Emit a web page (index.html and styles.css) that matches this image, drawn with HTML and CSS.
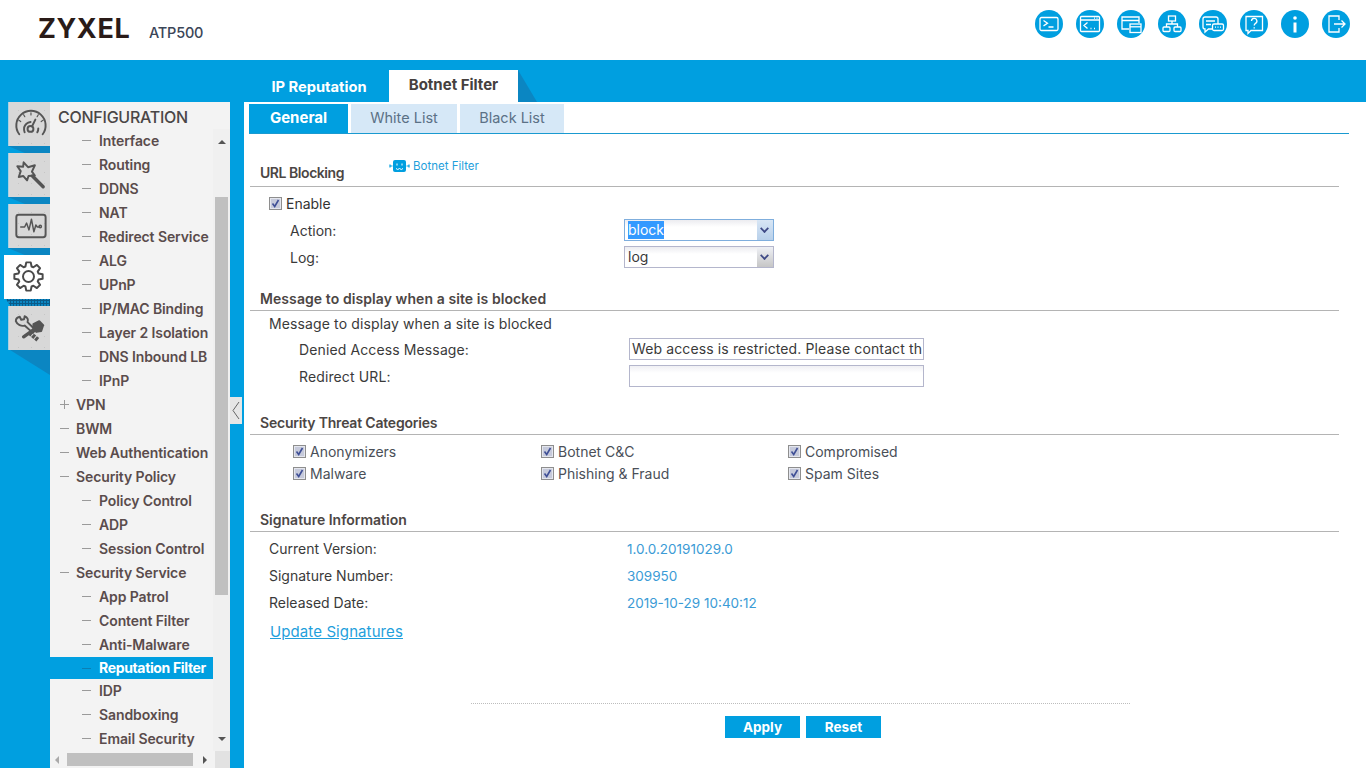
FILE: index.html
```html
<!DOCTYPE html>
<html lang="en">
<head>
<meta charset="utf-8">
<title>ATP500 Botnet Filter</title>
<link rel="stylesheet" href="styles.css">
</head>
<body>
<header class="topbar">
  <div class="brand"><span class="logo">ZYXEL</span><span class="model">ATP500</span></div>
  <div class="tools">
    <svg class="tool" viewBox="0 0 28 28"><circle cx="14" cy="14" r="14" class="disc"/><rect x="5" y="7.500" width="18" height="13" rx="1.500"/><path d="M8.500 10.500l4 2.700-4 2.700M13.500 17h5"/></svg>
    <svg class="tool" viewBox="0 0 28 28"><circle cx="14" cy="14" r="14" class="disc"/><rect x="4.500" y="6.500" width="19" height="15" rx="1"/><path d="M4.500 10h19M11.500 12.500l-3.500 3 3.500 3M14.500 18.500h1M18 18.500h1M18 8.200h1M20.500 8.200h1"/></svg>
    <svg class="tool" viewBox="0 0 28 28"><circle cx="14" cy="14" r="14" class="disc"/><path d="M12 19H5V7h17v6M5 10.500h17"/><rect x="13" y="14" width="11" height="8.500" class="box"/><path d="M13 16.800h11"/></svg>
    <svg class="tool" viewBox="0 0 28 28"><circle cx="14" cy="14" r="14" class="disc"/><rect x="10.500" y="6" width="7" height="5"/><rect x="5" y="17" width="7" height="4.500" rx="1"/><rect x="16" y="17" width="7" height="4.500" rx="1"/><path d="M14 11v3M8.500 17v-3h11v3"/></svg>
    <svg class="tool" viewBox="0 0 28 28"><circle cx="14" cy="14" r="14" class="disc"/><path d="M19 14V9a2 2 0 0 0-2-2H6a2 2 0 0 0-2 2v8a2 2 0 0 0 2 2v3l3.500-3H13"/><path d="M7 11h9M7 14.500h5"/><rect x="13.500" y="14" width="11" height="6.500" rx="1.500" class="box"/><path d="M16 17.200h1M18.500 17.200h1M21 17.200h1"/></svg>
    <svg class="tool" viewBox="0 0 28 28"><circle cx="14" cy="14" r="14" class="disc"/><path d="M6 6.500h16.500v14H11l-3 3v-3H6z"/><path d="M11.500 11a2.700 2.700 0 1 1 4 2.400c-1 .6-1.300 1-1.300 2.100M14.200 17.300v1.200"/></svg>
    <svg class="tool" viewBox="0 0 28 28"><circle cx="14" cy="14" r="14" class="disc"/><circle cx="14" cy="8" r="1.800" class="dot"/><path class="bar" d="M14 12.500v10"/></svg>
    <svg class="tool" viewBox="0 0 28 28"><circle cx="14" cy="14" r="14" class="disc"/><path d="M17 10V6H7v16h10v-4M12 14h11M19.500 10.500L23 14l-3.500 3.500"/></svg>
  </div>
</header>

<div class="band">
  <nav class="page-tabs">
    <span class="page-tab">IP Reputation</span>
    <span class="page-tab page-tab-on">Botnet Filter</span>
    <span class="page-tab-fold"></span>
  </nav>

  <div class="workspace">
    <aside class="rail">
      <div class="tile">
        <svg class="tile-ico" viewBox="0 0 42 44"><path d="M10.500 32.500a15 15 0 1 1 24 0"/><path d="M10 18l2 1.500M15 12.500l1.200 2M22.500 10.500v2.200M30 12.500l-1.200 2M35 18l-2 1.500" class="thin"/><path d="M16 30.500a7.500 9 0 0 1-.5-5c1-3 3.500-5 6.500-5.500"/><path d="M29 30.500a8 8 0 0 0 1-4"/><circle cx="22" cy="27" r="3"/><path d="M23.500 24.500l3.500-7"/></svg>
      </div>
      <div class="fold"></div>
      <div class="tile">
        <svg class="tile-ico" viewBox="0 0 42 44"><path d="M15 9l4.500 5 7-2-3 6.500 3 4-6.500.5-1.500 4.500-4-4.500-4.500 1 2-6-3.500-5 6 .5z"/><path class="heavy" d="M24 23l11 11"/></svg>
      </div>
      <div class="fold"></div>
      <div class="tile">
        <svg class="tile-ico" viewBox="0 0 42 44"><rect x="7.500" y="10.500" width="30" height="23" rx="2.500"/><path class="mid" d="M12 23h4l2-4 2.500 7 2.500-11 2.500 13 2-7 1.500 2h2"/><circle class="mid" cx="32" cy="22.500" r="1.200"/></svg>
      </div>
      <div class="fold"></div>
      <div class="tile tile-on">
        <svg class="tile-ico" viewBox="0 0 46 44"><g transform="translate(24.500 21.500) scale(1.100)"><polygon class="gear" points="9.080,-2.780 12.840,-2.030 12.840,2.030 9.080,2.780 8.390,4.450 10.510,7.640 7.640,10.510 4.450,8.390 2.780,9.080 2.030,12.840 -2.030,12.840 -2.780,9.080 -4.450,8.390 -7.640,10.510 -10.510,7.640 -8.390,4.450 -9.080,2.780 -12.840,2.030 -12.840,-2.030 -9.080,-2.780 -8.390,-4.450 -10.510,-7.640 -7.640,-10.510 -4.450,-8.390 -2.780,-9.080 -2.030,-12.840 2.030,-12.840 2.780,-9.080 4.450,-8.390 7.640,-10.510 10.510,-7.640 8.390,-4.450"/><circle class="gear" r="5"/></g></svg>
      </div>
      <div class="fold fold-on"></div>
      <div class="tile">
        <svg class="tile-ico" viewBox="0 0 42 44"><path d="M7 15c0-3 1.500-4 4-4.500l1.500 3 3-.5.500-3c3 1 4 3.500 3 6l8 8-2.500 3-8.500-7.500c-3 1-7.500-.5-9-4.500z"/><path class="heavy" d="M15 31l10-7"/><path class="fat" d="M25 18l6-3 4 4-2 6-5 1-3-4z"/><path class="hollow" d="M21 27l8.500 7"/></svg>
      </div>
      <div class="fold fold-last"></div>
    </aside>

    <aside class="sidebar">
      <div class="side-title">CONFIGURATION</div>
      <div class="side-mid">
        <ul class="tree">
          <li class="sub">Interface</li>
          <li class="sub">Routing</li>
          <li class="sub">DDNS</li>
          <li class="sub">NAT</li>
          <li class="sub">Redirect Service</li>
          <li class="sub">ALG</li>
          <li class="sub">UPnP</li>
          <li class="sub">IP/MAC Binding</li>
          <li class="sub">Layer 2 Isolation</li>
          <li class="sub">DNS Inbound LB</li>
          <li class="sub">IPnP</li>
          <li class="top plus">VPN</li>
          <li class="top">BWM</li>
          <li class="top">Web Authentication</li>
          <li class="top">Security Policy</li>
          <li class="sub">Policy Control</li>
          <li class="sub">ADP</li>
          <li class="sub">Session Control</li>
          <li class="top">Security Service</li>
          <li class="sub">App Patrol</li>
          <li class="sub">Content Filter</li>
          <li class="sub">Anti-Malware</li>
          <li class="sub active">Reputation Filter</li>
          <li class="sub">IDP</li>
          <li class="sub">Sandboxing</li>
          <li class="sub">Email Security</li>
        </ul>
        <div class="vscroll">
          <span class="arrow-up"></span>
          <span class="vthumb"></span>
          <span class="arrow-down"></span>
        </div>
      </div>
      <div class="hscroll">
        <span class="arrow-left"></span>
        <span class="hthumb"></span>
        <span class="arrow-right"></span>
        <span class="corner"></span>
      </div>
    </aside>

    <div class="gutter"><span class="collapse"><svg viewBox="0 0 12 27"><path d="M9 5L3 13.500 9 22"/></svg></span></div>

    <main class="content">
      <div class="sub-tabs">
        <span class="sub-tab sub-tab-on">General</span>
        <span class="sub-tab sub-tab-w">White List</span>
        <span class="sub-tab sub-tab-b">Black List</span>
      </div>

      <section class="first">
        <div class="head head-first">
          <h2>URL Blocking</h2>
          <a class="bot-link"><svg class="bot" viewBox="0 0 21 12"><rect x="4" y="0" width="13" height="12" rx="2"/><path class="nub" d="M0.500 6h3M17.500 6h3M1 4.500v3M20 4.500v3"/><path class="face" d="M8 3.500v2M13 3.500v2M7 8.500l1.700 1 1.800-1 1.800 1 1.700-1"/></svg>Botnet Filter</a>
        </div>
        <div class="body-url">
          <label class="row check-row"><svg class="cb"><use href="#cb"/></svg>Enable</label>
          <div class="row form-a"><span class="lbl">Action:</span><span class="combo combo-focus"><span class="combo-text"><span class="hl">block</span></span><span class="combo-btn"></span></span></div>
          <div class="row form-a"><span class="lbl">Log:</span><span class="combo"><span class="combo-text">log</span><span class="combo-btn"></span></span></div>
        </div>
      </section>

      <section class="sec-msg">
        <div class="head"><h2>Message to display when a site is blocked</h2></div>
        <div class="msg-note">Message to display when a site is blocked</div>
        <div class="row form-b"><span class="lbl">Denied Access Message:</span><span class="field">Web access is restricted. Please contact th</span></div>
        <div class="row form-b"><span class="lbl">Redirect URL:</span><span class="field field-empty"></span></div>
      </section>

      <section class="sec-threat">
        <div class="head"><h2>Security Threat Categories</h2></div>
        <div class="cats">
          <label class="cat"><svg class="cb"><use href="#cb"/></svg>Anonymizers</label>
          <label class="cat"><svg class="cb"><use href="#cb"/></svg>Botnet C&amp;C</label>
          <label class="cat"><svg class="cb"><use href="#cb"/></svg>Compromised</label>
          <label class="cat"><svg class="cb"><use href="#cb"/></svg>Malware</label>
          <label class="cat"><svg class="cb"><use href="#cb"/></svg>Phishing &amp; Fraud</label>
          <label class="cat"><svg class="cb"><use href="#cb"/></svg>Spam Sites</label>
        </div>
      </section>

      <section class="sec-sig">
        <div class="head"><h2>Signature Information</h2></div>
        <div class="info">
          <div class="row info-row"><span class="info-lbl">Current Version:</span><span class="val">1.0.0.20191029.0</span></div>
          <div class="row info-row"><span class="info-lbl">Signature Number:</span><span class="val">309950</span></div>
          <div class="row info-row"><span class="info-lbl">Released Date:</span><span class="val">2019-10-29 10:40:12</span></div>
          <a class="update">Update Signatures</a>
        </div>
      </section>

      <footer class="actions">
        <span class="btn">Apply</span>
        <span class="btn">Reset</span>
      </footer>
    </main>
  </div>
</div>

<svg class="sprite" aria-hidden="true">
  <symbol id="cb" viewBox="0 0 13 13">
    <rect x="0.500" y="0.500" width="12" height="12" fill="#e4e6ee" stroke="#8e8e8e"/>
    <rect x="2" y="2" width="9" height="9" fill="#c6cadb"/>
    <path d="M3.500 6.500l2.200 3 3.800-6.500" fill="none" stroke="#3f4f96" stroke-width="1.600"/>
  </symbol>
</svg>
</body>
</html>
```
FILE: styles.css
```css
* { box-sizing: border-box; }
html, body { margin: 0; padding: 0; height: 100%; overflow: hidden; }
body { font-family: Inter, "Liberation Sans", sans-serif; font-size: 14px; color: #3a3a3a; background: #fff; display: flex; flex-direction: column; }
h2 { margin: 0; font: inherit; }
ul { list-style: none; margin: 0; padding: 0; }
.sprite { width: 0; height: 0; display: block; overflow: hidden; }

.topbar { height: 60px; flex: none; background: #fff; display: flex; justify-content: space-between; align-items: center; }
.brand { display: flex; align-items: baseline; padding: 0 0 2px 38px; }
.logo { font-size: 27px; font-weight: 700; color: #2a1b18; letter-spacing: .6px; width: 111px; line-height: 28px; }
.model { font-size: 14.500px; font-weight: 500; color: #3b4658; letter-spacing: -.2px; }
.tools { display: flex; gap: 13px; padding: 0 16px 12px 0; }
.tool { width: 28px; height: 28px; fill: none; stroke: #fff; stroke-width: 1.300; }
.tool .disc { fill: #009fe0; stroke: none; }
.tool .box { fill: #009fe0; }
.tool .dot { fill: #fff; stroke: none; }
.tool .bar { stroke-width: 3; }

.band { flex: 1; min-height: 0; background: #009fe0; display: flex; flex-direction: column; }
.page-tabs { height: 42px; flex: none; display: flex; align-items: flex-end; padding-left: 250px; }
.page-tab { width: 138px; height: 32px; text-align: center; color: #fff; font-weight: 700; font-size: 14.700px; line-height: 32px; padding-top: 1px; }
.page-tab-on { margin-left: 1px; background: #fff; color: #45403e; width: 129px; font-size: 15px; line-height: 30px; padding-top: 0; }
.page-tab-fold { width: 19px; height: 32px; background: #0b86c2; clip-path: polygon(0 0, 0 100%, 100% 100%); }

.workspace { flex: 1; min-height: 0; display: flex; }

.rail { width: 50px; flex: none; padding-left: 8px; display: flex; flex-direction: column; }
.tile { height: 44px; flex: none; background: #d8d8d8 radial-gradient(#c6c6c6 .6px, transparent .8px) 3px 3px / 13px 11px; border-left: 1px solid #a9cfe2; }
.tile-on { background: #fff; margin-left: -4px; border-left: 0; }
.tile-ico { display: block; height: 44px; width: 100%; fill: none; stroke: #555; stroke-width: 2; stroke-linejoin: round; stroke-linecap: round; }
.tile-ico .thin { stroke-width: 1.200; }
.tile-ico .mid { stroke-width: 1.500; }
.tile-ico .heavy { stroke-width: 3.500; }
.tile-ico .fat { fill: #555; }
.tile-ico .hollow { stroke-width: 4.500; stroke-linecap: butt; stroke-dasharray: 3 1; }
.tile-ico .gear { stroke: #4a4a4a; stroke-width: 1.800; }
.fold { height: 7px; flex: none; background: #0b86c2; clip-path: polygon(0 0, 100% 0, 100% 100%, 40% 100%); }
.fold-on { margin-left: -2px; background: #0b86c2 radial-gradient(#0a5a88 1px, transparent 1.200px) 0 0 / 3px 3px; clip-path: polygon(0 0, 100% 0, 100% 100%, 10% 100%); }
.fold-last { height: 25px; clip-path: polygon(5% 0, 100% 0, 100% 100%); }

.sidebar { width: 180px; flex: none; background: #f3f3f3; display: flex; flex-direction: column; }
.side-title { height: 27px; flex: none; padding-left: 8px; font-size: 16px; line-height: 30px; font-weight: 500; color: #4a4646; letter-spacing: -.25px; }
.side-mid { flex: 1; min-height: 0; display: flex; }
.tree { width: 163px; flex: none; font-weight: 600; font-size: 14px; letter-spacing: -.1px; color: #5a4c4c; }
.tree li { height: 24px; line-height: 24px; position: relative; white-space: nowrap; overflow: hidden; }
.tree .sub { padding-left: 49px; }
.tree .top { padding-left: 26px; }
.tree .sub::before, .tree .top::before { content: ""; position: absolute; top: 11px; width: 9px; height: 1px; background: #9a9a9a; }
.tree .sub::before { left: 32px; }
.tree .top::before { left: 10px; }
.tree .plus::after { content: ""; position: absolute; left: 14px; top: 7px; width: 1px; height: 9px; background: #9a9a9a; }
.tree .active { height: 22px; line-height: 22px; background: #009fe0; color: #fff; font-weight: 700; letter-spacing: -.35px; }
.tree .active::before { background: #0b7fb4; }

.vscroll { width: 17px; flex: none; background: #f0f0f0; display: flex; flex-direction: column; align-items: center; }
.arrow-up { margin-top: 11px; border: 4px solid transparent; border-top: 0; border-bottom: 4px solid #555; }
.vthumb { margin-top: 53px; width: 13px; height: 398px; background: #c0c0c0; }
.arrow-down { margin-top: 142px; border: 4px solid transparent; border-bottom: 0; border-top: 4px solid #555; }
.hscroll { height: 17px; flex: none; display: flex; align-items: center; }
.arrow-left { margin-left: 5px; border: 4px solid transparent; border-left: 0; border-right: 4px solid #aaa; }
.hthumb { margin-left: 8px; width: 126px; height: 13px; background: #c0c0c0; }
.arrow-right { margin-left: 10px; border: 4px solid transparent; border-right: 0; border-left: 4px solid #555; }
.corner { margin-left: 8px; flex: 1; height: 17px; background: #e2e2e2; }

.gutter { width: 14px; flex: none; padding-top: 295px; }
.collapse { display: block; width: 12px; height: 27px; background: #e6e6e6; }
.collapse svg { display: block; width: 12px; height: 27px; fill: none; stroke: #666; stroke-width: 1; }

.content { flex: 1; min-width: 0; background: #fff; padding-top: 2px; }
.sub-tabs { height: 30px; margin: 0 17px 0 5px; display: flex; gap: 3px; border-bottom: 1px solid #1a9ad0; }
.sub-tab { height: 29px; line-height: 28px; text-align: center; font-size: 14.500px; background: #d6e8f7; color: #5b7186; }
.sub-tab-on { width: 99px; background: #009fe0; color: #fff; font-weight: 700; font-size: 15px; }
.sub-tab-w { width: 106px; }
.sub-tab-b { width: 104px; }

section { margin: 0 27px 0 6px; }
.first { margin-top: 29px; }
.sec-msg { margin-top: 18px; }
.sec-threat { margin-top: 23px; }
.sec-sig { margin-top: 25px; }
.head { display: flex; padding: 0 0 1px 10px; line-height: 20px; border-bottom: 1px solid #b4b4b4; font-weight: 600; font-size: 14px; color: #4c4644; }
.head-first { padding-bottom: 3px; }
.head-first h2 { width: 129px; letter-spacing: -.45px; }
.sec-threat h2 { letter-spacing: -.2px; }
.sec-msg h2 { letter-spacing: .08px; }
.bot-link { align-self: flex-start; margin-top: -3px; height: 12px; display: flex; align-items: center; gap: 3px; font-size: 11.500px; line-height: 12px; font-weight: 400; color: #1f9fdc; }
.bot { width: 21px; height: 12px; flex: none; }
.bot rect { fill: #009fe0; }
.bot .nub { fill: none; stroke: #009fe0; stroke-width: 1.200; }
.bot .face { fill: none; stroke: #fff; stroke-width: 1; }

.row { display: flex; }
.body-url { padding-top: 3px; }
.check-row { height: 27px; padding-left: 19px; align-items: center; gap: 4px; color: #333; }
.cb { width: 13px; height: 13px; flex: none; }
.form-a { height: 27px; padding: 2px 0 0 40px; }
.form-a .lbl { width: 334px; line-height: 24px; }
.combo { width: 150px; height: 22px; display: flex; border: 1px solid #b4b6cc; background: linear-gradient(#ececf0, #fff 35%); }
.combo-focus { border-color: #7faedd; }
.combo-text { flex: 1; padding: 1px 0 0 3px; line-height: 18px; }
.hl { display: inline-block; background: #3399ff; color: #fff; padding: 0; }
.combo-btn { width: 16px; background: linear-gradient(#eef0f5, #c6c6c6); position: relative; }
.combo-focus .combo-btn { background: linear-gradient(#d8e6f5, #b8d0ea); }
.combo-btn::after { content: ""; position: absolute; left: 4px; top: 5px; width: 5px; height: 5px; border: solid #3f4a86; border-width: 0 2px 2px 0; transform: rotate(45deg) scale(.9); }

.msg-note { height: 25px; line-height: 26px; padding-left: 19px; letter-spacing: .12px; }
.form-b { height: 27px; padding: 2px 0 0 49px; letter-spacing: .12px; }
.form-b .lbl { width: 330px; line-height: 23px; }
.field { width: 295px; height: 22px; border: 1px solid #b4b6cc; padding: 0 2px; line-height: 20px; white-space: nowrap; overflow: hidden; color: #3a3a3a; }
.field-empty { background: linear-gradient(#f0f0f4, #fff 35%); }

.cats { padding: 5px 0 0 43px; display: grid; grid-template-columns: 248px 247px 1fr; grid-auto-rows: 22px; }
.cat { display: flex; align-items: center; gap: 4px; color: #4a4f58; }

.sec-sig { margin-top: 26px; }
.info { padding-top: 3px; }
.info-row { height: 27px; padding-left: 19px; align-items: center; }
.info-lbl { width: 358px; }
.val { color: #3b9bd6; font-size: 13.500px; }
.update { display: block; height: 31px; line-height: 31px; margin-left: 20px; color: #1f9fdc; font-size: 15px; letter-spacing: .1px; text-decoration: underline; }

.actions { margin: 56px 0 0 227px; width: 659px; border-top: 1px dotted #bdbdbd; padding: 12px 0 0 254px; display: flex; gap: 6px; }
.btn { width: 75px; height: 22px; line-height: 22px; text-align: center; background: #009fe0; color: #fff; font-weight: 700; font-size: 13.500px; }
```
